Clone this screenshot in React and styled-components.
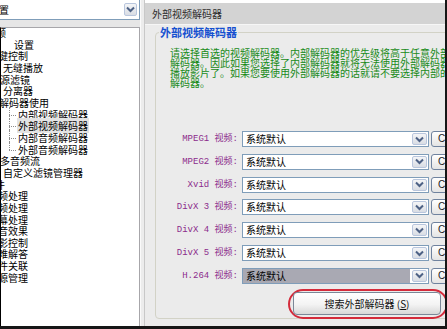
import React from "react";
import styled, { createGlobalStyle } from "styled-components";

const GlobalStyle = createGlobalStyle`
  html, body { margin: 0; padding: 0; background: #fff; overflow: hidden; }
  body { font-family: "Noto Sans CJK SC", "Liberation Sans", sans-serif; }
  * { box-sizing: border-box; }
`;

const Frame = styled.div`
  width: 447px;
  height: 329px;
  display: grid;
  grid-template-columns: 140px 5px 1fr;
  border-right: 2px solid #161616;
  border-bottom: 3px solid #161616;
  overflow: hidden;
  background: #e9e9e9;
`;

/* ---------- left pane ---------- */
const LeftPane = styled.div`
  display: flex;
  flex-direction: column;
  min-height: 0;
  background: #e6e6e6;
`;

const TopCombo = styled.div`
  height: 20px;
  background: #fff;
  border-right: 1px solid #7f9db9;
  border-bottom: 1px solid #7f9db9;
  display: flex;
  align-items: center;
  justify-content: space-between;
  padding-right: 2px;
  overflow: hidden;
  font-size: 10px;
  color: #000;
  white-space: nowrap;
`;

const ComboText = styled.span`
  margin-left: ${(p) => p.$indent || 0}px;
`;

const ArrowBtn = styled.span`
  width: ${(p) => p.$w || 13}px;
  height: ${(p) => p.$h || 13}px;
  flex: none;
  display: flex;
  align-items: center;
  justify-content: center;
  border: 1px solid #b9c6dd;
  border-radius: 2px;
  background: linear-gradient(#f4f5f7, #d9dde4);
`;

const Chevron = () => (
  <svg width="9" height="7" viewBox="0 0 9 7">
    <polyline points="1,1.5 4.5,5 8,1.5" fill="none" stroke="#4d6185" strokeWidth="2" />
  </svg>
);

const Tree = styled.div`
  flex: 1;
  margin-top: 7px;
  background: #fff;
  border-top: 1px solid #a7a6aa;
  border-left: 1px solid #000;
  border-right: 1px solid #a7a6aa;
  overflow: hidden;
`;

const TreeList = styled.div`
  margin-top: -1px;
`;

const TreeRow = styled.div`
  height: 11.67px;
  line-height: 11.67px;
  font-size: 10px;
  color: #000;
  white-space: nowrap;
  margin-left: ${(p) => p.$indent || 0}px;
`;

const ChildRow = styled.div`
  position: relative;
  height: 11.67px;
  line-height: 11.67px;
  font-size: 10px;
  color: #000;
  white-space: nowrap;
  padding-left: 16px;
  &::before {
    content: "";
    position: absolute;
    left: 8px;
    top: 6px;
    width: 7px;
    border-top: 1px dotted #8c8c8c;
  }
  &::after {
    content: "";
    position: absolute;
    left: 8px;
    top: -2px;
    height: ${(p) => (p.$last ? 8 : 12)}px;
    border-left: 1px dotted #8c8c8c;
  }
`;

const ChildLabel = styled.span`
  padding: 0 1px;
  background: ${(p) => (p.$selected ? "#e3e3e3" : "transparent")};
`;

const Splitter = styled.div`
  background: #ececec;
  border-left: 1px solid #fafafa;
  border-right: 1px solid #c8c8c8;
`;

/* ---------- right pane ---------- */
const RightPane = styled.div`
  display: flex;
  flex-direction: column;
  min-width: 0;
  overflow: hidden;
  background: #ebebeb;
`;

const TopStrip = styled.div`
  height: 3px;
  background: #fff;
  flex: none;
`;

const Header = styled.div`
  height: 22px;
  flex: none;
  background: #d3d3d3;
  border-bottom: 1px solid #f6f6f6;
  padding-left: 7px;
  font-size: 10px;
  line-height: 21px;
  color: #2d2d2d;
  white-space: nowrap;
`;

const Group = styled.fieldset`
  margin: 1px 0 0 10px;
  padding: 0;
  width: 320px;
  height: 293px;
  min-width: 0;
  border: 1px solid #d2d2c6;
  border-radius: 4px;
  flex: none;
`;

const Legend = styled.legend`
  margin-left: 3px;
  padding: 0 1px;
  font-size: 11px;
  line-height: 12px;
  font-weight: bold;
  color: #1550d0;
`;

const Desc = styled.div`
  margin: 10px 0 0 14px;
  font-size: 10px;
  line-height: 10px;
  color: #188a18;
`;

const DescLine = styled.div`
  white-space: nowrap;
`;

const Rows = styled.div`
  margin-top: 43px;
  display: grid;
  grid-template-columns: 84px 187px 24px;
  column-gap: 2px;
  row-gap: 6.83px;
  align-items: center;
`;

const Label = styled.div`
  text-align: right;
  padding-right: 2px;
  font-family: "Liberation Mono", "Noto Sans CJK SC", monospace;
  font-size: 9px;
  line-height: 16px;
  color: #8b2b8b;
  white-space: pre;
`;

const Combo = styled.div`
  height: 16px;
  display: flex;
  align-items: center;
  border: 1px solid #7f9db9;
  background: #fff;
  padding: 0 1px 0 0;
`;

const Field = styled.div`
  flex: 1;
  height: 100%;
  font-size: 10px;
  line-height: 14px;
  padding-left: 3px;
  color: #000;
  background: ${(p) => (p.$selected ? "#a9a9b3" : "#fff")};
  margin-right: 2px;
`;

const SideButton = styled.div`
  height: 16px;
  border: 1px solid #6f829e;
  border-radius: 3px;
  background: linear-gradient(#ffffff, #e4e4e4);
  font-family: "Liberation Sans", sans-serif;
  font-size: 10px;
  line-height: 14px;
  padding-left: 6px;
  color: #222;
`;

const SearchRow = styled.div`
  margin: 5px 0 0 132px;
  display: flex;
`;

const Highlight = styled.div`
  display: flex;
  padding: 1px 5px 2px 3px;
  border: 2px solid #d42b3b;
  border-radius: 16px;
`;

const SearchButton = styled.div`
  width: 148px;
  height: 23px;
  border: 1px solid #7b8797;
  border-radius: 4px;
  background: linear-gradient(#ffffff 0%, #f3f3f3 55%, #d8d8d8 100%);
  font-size: 10px;
  line-height: 21px;
  text-align: center;
  color: #111;
  white-space: nowrap;
`;

const Key = styled.span`
  text-decoration: underline;
`;

const treeTop = [
  { t: "频", i: -5 },
  { t: "设置", i: 13 },
  { t: "键控制", i: -3 },
  { t: "无缝播放", i: 2 },
  { t: "源滤镜", i: -1 },
  { t: "分离器", i: 2 },
  { t: "解码器使用", i: -2 },
];

const children = [
  { t: "内部视频解码器" },
  { t: "外部视频解码器", selected: true },
  { t: "内部音频解码器" },
  { t: "外部音频解码器", last: true },
];

const treeBottom = [
  { t: "多音频流", i: -1 },
  { t: "自定义滤镜管理器", i: 2 },
  { t: "件", i: -6 },
  { t: "频处理", i: -3 },
  { t: "频处理", i: -3 },
  { t: "幕处理", i: -3 },
  { t: "音效果", i: -3 },
  { t: "影控制", i: -3 },
  { t: "难解答", i: -3 },
  { t: "件关联", i: -3 },
  { t: "源管理", i: -3 },
];

const codecs = [
  "MPEG1 视频:",
  "MPEG2 视频:",
  "Xvid 视频:",
  "DivX 3 视频:",
  "DivX 4 视频:",
  "DivX 5 视频:",
  "H.264 视频:",
];

export default function App() {
  return (
    <>
      <GlobalStyle />
      <Frame>
        <LeftPane>
          <TopCombo>
            <ComboText $indent={-1}>置</ComboText>
            <ArrowBtn>
              <Chevron />
            </ArrowBtn>
          </TopCombo>
          <Tree>
            <TreeList>
              {treeTop.map((r, k) => (
                <TreeRow key={"a" + k} $indent={r.i}>{r.t}</TreeRow>
              ))}
              {children.map((c, k) => (
                <ChildRow key={"c" + k} $last={c.last}>
                  <ChildLabel $selected={c.selected}>{c.t}</ChildLabel>
                </ChildRow>
              ))}
              {treeBottom.map((r, k) => (
                <TreeRow key={"b" + k} $indent={r.i}>{r.t}</TreeRow>
              ))}
            </TreeList>
          </Tree>
        </LeftPane>
        <Splitter />
        <RightPane>
          <TopStrip />
          <Header>外部视频解码器</Header>
          <Group>
            <Legend>外部视频解码器</Legend>
            <Desc>
              <DescLine>请选择首选的视频解码器。内部解码器的优先级将高于任意外部解码器</DescLine>
              <DescLine>解码器。因此如果您选择了内部解码器就将无法使用外部解码器来</DescLine>
              <DescLine>播放影片了。如果您要使用外部解码器的话就请不要选择内部的</DescLine>
              <DescLine>解码器。</DescLine>
            </Desc>
            <Rows>
              {codecs.map((c, k) => (
                <React.Fragment key={c}>
                  <Label>{c}</Label>
                  <Combo>
                    <Field $selected={k === codecs.length - 1}>系统默认</Field>
                    <ArrowBtn $w={15} $h={12}>
                      <Chevron />
                    </ArrowBtn>
                  </Combo>
                  <SideButton>C</SideButton>
                </React.Fragment>
              ))}
            </Rows>
            <SearchRow>
              <Highlight>
                <SearchButton>
                  搜索外部解码器 (<Key>S</Key>)
                </SearchButton>
              </Highlight>
            </SearchRow>
          </Group>
        </RightPane>
      </Frame>
    </>
  );
}
